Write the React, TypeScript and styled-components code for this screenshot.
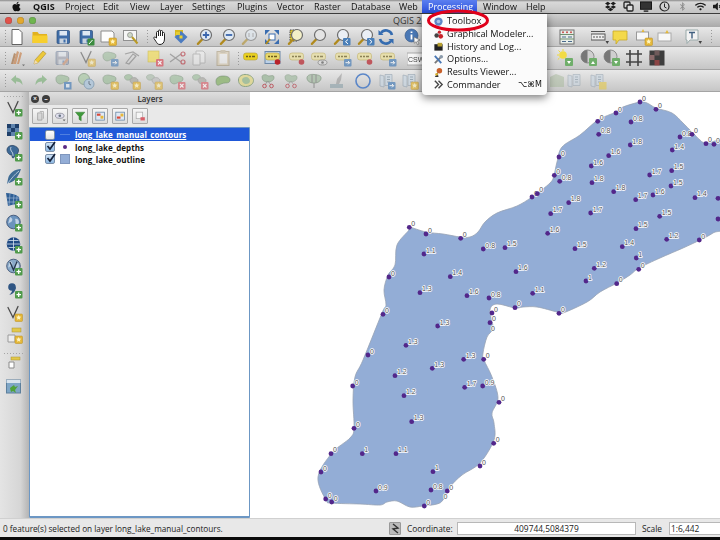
import React from "react";
import styled, { createGlobalStyle } from "styled-components";
import { FaApple, FaDropbox, FaWifi, FaBluetoothB, FaVolumeUp } from "react-icons/fa";

const Global = createGlobalStyle`
  html, body { margin: 0; padding: 0; width: 720px; height: 540px; overflow: hidden; background: #000; }
  #root { width: 720px; height: 540px; }
`;

const UI = `"Open Sans", "Liberation Sans", sans-serif`;

const Page = styled.div`
  width: 720px; height: 540px; position: relative; display: flex; flex-direction: column;
  font-family: ${UI}; color: #111; overflow: hidden; background: #000;
`;
const MenuBar = styled.div`
  height: 14px; flex: none; display: flex; align-items: stretch; font-size: 9px; line-height: 13px;
  background: linear-gradient(#8a8a8a 0, #d8d8d8 2px, #c4c4c4 100%);
  border-bottom: 1px solid #3c3c3c; box-sizing: border-box; filter: blur(0.25px);
`;
const AppleSlot = styled.div`
  width: 27px; flex: none; padding-left: 11px; box-sizing: border-box; display: flex; align-items: center; font-size: 11px; color: #111;
`;
const MenuItem = styled.div<{ $w: number; $bold?: boolean; $on?: boolean }>`
  width: ${(p) => p.$w}px; flex: none; box-sizing: border-box; padding-left: 6px; white-space: nowrap;
  font-weight: ${(p) => (p.$bold ? 700 : 500)};
  color: ${(p) => (p.$on ? "#fff" : "#111")};
  background: ${(p) => (p.$on ? "linear-gradient(#5b7ff0, #2a4fdc)" : "transparent")};
`;
const Tray = styled.div`
  margin-left: auto; display: flex; align-items: center; gap: 6px; color: #1c1c1c; font-size: 11px; margin-right: -4px;
`;
const TraySlot = styled.div<{ $faint?: boolean }>`
  width: 12px; display: flex; justify-content: center; align-items: center;
  color: ${(p) => (p.$faint ? "#888" : "inherit")};
  font-size: ${(p) => (p.$faint ? "9px" : "inherit")};
`;
const TitleBar = styled.div`
  height: 13px; flex: none; position: relative; display: flex; align-items: center; padding-left: 393px; font-size: 9px; color: #333;
  background: linear-gradient(#cfcfcf, #a9a9a9);
`;
const Lights = styled.div`
  position: absolute; left: 5px; top: 3px; display: flex; gap: 5px;
`;
const Light = styled.span<{ $c: string }>`
  width: 7px; height: 7px; border-radius: 50%; background: ${(p) => p.$c}; box-shadow: inset 0 0 1px #0008;
`;
const ToolRow = styled.div<{ $h: number }>`
  height: ${(p) => p.$h}px; flex: none; display: flex; align-items: center; box-sizing: border-box;
  background: linear-gradient(#e8e8e8, #c6c6c6); border-bottom: 1px solid #a4a4a4;
`;
const Slot = styled.div<{ $ml: number }>`
  width: 18px; height: 18px; margin-left: ${(p) => p.$ml}px; flex: none; display: flex; align-items: center; justify-content: center;
`;
const IconSvg = styled.svg`
  width: 18px; height: 18px; display: block; filter: blur(0.3px);
`;
const SmallIcon = styled(IconSvg)`
  width: 13px; height: 13px;
`;
const Grip = styled.div`
  width: 3px; height: 15px; background-image: radial-gradient(#9a9a9a 40%, transparent 45%); background-size: 3px 3px;
`;
const HGrip = styled.div`
  width: 22px; height: 3px; background-image: radial-gradient(#a6a6a6 40%, transparent 45%); background-size: 3px 3px;
`;
const Main = styled.div`
  flex: 1; min-height: 0; display: flex; background: #fff;
`;
const SideBar = styled.div`
  width: 29px; flex: none; display: flex; flex-direction: column; align-items: center;
  background: linear-gradient(90deg, #e4e4e4, #d6d6d6 70%, #b4b4b4);
`;
const SideSlot = styled.div<{ $mt: number }>`
  height: 18px; width: 22px; margin-top: ${(p) => p.$mt}px; margin-left: -2px; flex: none; display: flex; align-items: center; justify-content: center;
`;
const Dock = styled.div`
  width: 221px; flex: none; display: flex; flex-direction: column; background: #e9e9e9; box-sizing: border-box;
`;
const DockTitle = styled.div`
  height: 13px; flex: none; display: flex; align-items: center; padding-left: 2px; gap: 3px; position: relative;
  background: linear-gradient(#dedede, #c6c6c6);
`;
const DockTitleText = styled.div`
  position: absolute; left: 21px; right: 0; top: 0; text-align: center; font-size: 8px; line-height: 13px; font-weight: 600; color: #333;
`;
const DockClose = styled.span`
  width: 8px; height: 8px; border-radius: 50%; background: #3c3c3c; color: #eee; font-size: 7px; line-height: 8px; text-align: center; font-weight: 700;
`;
const DockTools = styled.div`
  height: 22px; flex: none; display: flex; align-items: center; gap: 4px; padding-left: 3px;
`;
const DockBtn = styled.div`
  width: 16px; height: 16px; flex: none; box-sizing: border-box; border: 1px solid #a9a9a9; border-radius: 1px;
  background: linear-gradient(#f6f6f6, #dcdcdc); display: flex; align-items: center; justify-content: center;
`;
const Tree = styled.div`
  flex: 1; min-height: 0; background: #fff; border: 1px solid #6c97c4; border-bottom-width: 2px; border-radius: 1px;
`;
const TreeRow = styled.div<{ $sel?: boolean; $h: number }>`
  height: ${(p) => p.$h}px; display: flex; align-items: center; padding-left: 15px;
  background: ${(p) => (p.$sel ? "#1f58d8" : "transparent")};
  color: ${(p) => (p.$sel ? "#fff" : "#111")};
`;
const Check = styled.span<{ $on?: boolean }>`
  width: 10px; height: 10px; flex: none; box-sizing: border-box; border: 1px solid #7b8fa8; border-radius: 2px; position: relative;
  background: ${(p) => (p.$on ? "linear-gradient(#cfe2f6, #8db8e2)" : "linear-gradient(#fff, #e4e4e4)")};
`;
const CheckSvg = styled.svg`
  position: absolute; left: 0; top: -2px; width: 10px; height: 10px; overflow: visible;
`;
const SymbolSlot = styled.span`
  width: 20px; flex: none; display: flex; align-items: center; justify-content: center;
`;
const Dot = styled.span`
  width: 4px; height: 4px; border-radius: 50%; background: #5a2a84;
`;
const Swatch = styled.span`
  width: 10px; height: 10px; background: #93add6; border: 0.5px solid #7f96bd; box-sizing: border-box;
`;
const LineSym = styled.span`
  width: 10px; height: 1px; background: #4f7fe0;
`;
const LayerName = styled.span<{ $sel?: boolean }>`
  font-size: 8px; font-weight: 700; white-space: nowrap; letter-spacing: 0.05px;
  text-decoration: ${(p) => (p.$sel ? "underline" : "none")};
`;
const Canvas = styled.div`
  flex: 1; min-width: 0; background: #fff;
`;
const MapSvg = styled.svg`
  width: 470px; height: 426px; display: block;
`;
const PtLabel = styled.text`
  font-family: "Liberation Sans", sans-serif; font-size: 7px; fill: #505050; stroke: #fff; stroke-width: 1.5px; paint-order: stroke; stroke-linejoin: round;
`;
const StatusBar = styled.div`
  height: 19px; flex: none; display: flex; align-items: center; background: #e8e8e8; font-size: 8.4px; color: #222; box-sizing: border-box; border-top: 1px solid #d0d0d0;
`;
const StatusMsg = styled.div`
  width: 389px; flex: none; padding-left: 3px; box-sizing: border-box; white-space: nowrap; font-size: 8.2px;
`;
const CoordBtn = styled.div`
  width: 12px; height: 13px; flex: none; background: #bbb; border: 1px solid #999; box-sizing: border-box; display: flex; align-items: center; justify-content: center; border-radius: 1px;
`;
const StatusLabel = styled.div<{ $w: number }>`
  width: ${(p) => p.$w}px; flex: none; white-space: nowrap; padding-left: 6px; box-sizing: border-box;
`;
const Field = styled.div`
  width: 179px; height: 13px; flex: none; background: #fff; border: 1px solid #b8b8b8; box-sizing: border-box; text-align: center; line-height: 11px;
`;
const Combo = styled.div`
  flex: 1; height: 13px; background: #fff; border: 1px solid #b8b8b8; border-right: none; box-sizing: border-box; line-height: 11px; padding-left: 1px;
`;
const BottomEdge = styled.div`
  height: 3px; flex: none; background: #0a0a0a;
`;
const DropMenu = styled.div`
  position: absolute; left: 422px; top: 14px; width: 125px; height: 81px; box-sizing: border-box; padding: 1px 0 0; z-index: 3;
  background: #fbfbfb; border-radius: 0 0 4px 4px; box-shadow: 0 3px 9px rgba(0,0,0,.5);
  font-size: 9.2px; font-weight: 500; filter: blur(0.2px);
`;
const DropItem = styled.div`
  height: 12.7px; display: flex; align-items: center; padding-right: 5px; white-space: nowrap; line-height: 12px;
`;
const DropIcon = styled.svg`
  width: 11px; height: 11px; margin-left: 11px; margin-right: 3px; flex: none;
`;
const Shortcut = styled.span`
  margin-left: auto; font-family: "DejaVu Sans", sans-serif; font-size: 8px;
`;
const Ring = styled.svg`
  position: absolute; left: 425px; top: 7px; width: 66px; height: 27px; z-index: 4; overflow: visible;
`;

/* ---- icon parts ---- */
const Star = () => (<g><rect x="10" y="10" width="7.5" height="7.5" rx="1" fill="#e4b738" stroke="#b98d1e" strokeWidth=".5"/><path d="M13.7 11l.8 1.6 1.8.2-1.3 1.2.3 1.8-1.6-.8-1.6.8.3-1.8-1.3-1.2 1.8-.2z" fill="#fff4c0"/></g>);
const Plus = () => (<g><rect x="10" y="10" width="7.5" height="7.5" rx="1" fill="#4f9a4a"/><path d="M13.7 11.5v4.5M11.5 13.7h4.5" stroke="#fff" strokeWidth="1.3"/></g>);
const Cross = () => (<g><rect x="10" y="10" width="7.5" height="7.5" rx="1" fill="#d9606a"/><path d="M12 12l3.5 3.5M15.5 12L12 15.5" stroke="#fff" strokeWidth="1.1"/></g>);
const Move = () => (<g><rect x="10" y="10" width="7.5" height="7.5" rx="1" fill="#4a7fb8"/><path d="M11.5 13.7h4M14 12l1.7 1.7-1.7 1.7" stroke="#fff" fill="none" strokeWidth="1"/></g>);
const Tri = () => <path d="M14.5 13h3.5l-1.75 3z" fill="#444"/>;
const RedDot = () => <circle cx="13.5" cy="13" r="2.8" fill="#b8232b"/>;
const Lens = ({ f = "#dfe9f3", c }: { f?: string; c?: React.ReactNode }) => (
  <g><path d="M6.5 11L2 15.8" stroke="#b08a1d" strokeWidth="2.4" strokeLinecap="round"/><circle cx="10" cy="7" r="5.5" fill={f} stroke="#6d6d6d" strokeWidth="1.2"/>{c}</g>
);
const Sheet = ({ c }: { c?: React.ReactNode }) => (
  <g><path d="M2 3h11l2 2v9H2z" fill="#fdfdfd" stroke="#8d8d8d"/>{c}</g>
);
const Floppy = ({ c = "#3f6da8" }: { c?: string }) => (
  <g><rect x="3" y="2.5" width="12.5" height="13" rx="1" fill={c} stroke="#2b4d7a" strokeWidth=".7"/><rect x="5.5" y="3" width="7.5" height="4.5" fill="#dfe8f2"/><rect x="5.5" y="10.5" width="7.5" height="5" fill="#c9d3de"/><rect x="9.5" y="11.5" width="2" height="3" fill="#3f6da8"/></g>
);
const Blob = ({ f = "#9dbd9b" }: { f?: string }) => (
  <path d="M2 6.5C2 3.5 6 2.5 9.5 3.5c3 .8 5.5.8 5.5 3.5s-3 2.5-5 3.5-3.5 2-5.5 1S2 9 2 6.5z" fill={f} stroke="#7a927a" strokeWidth=".8"/>
);
const Blob2 = ({ f = "#a8a8a0", g = "#9dbd9b" }: { f?: string; g?: string }) => (
  <g><path d="M1.5 5C1.5 3 5 2 7.5 3S10 6 7.5 7.5 1.5 8 1.5 5z" fill={g} stroke="#7a927a" strokeWidth=".6"/><path d="M7 8c0-2 4-3 6-2s3 3 1 5-7 1-7-3z" fill={f} stroke="#808080" strokeWidth=".6"/></g>
);
const Abc = ({ f = "#e8d46a" }: { f?: string }) => (
  <g><rect x="1.5" y="4" width="14" height="7" rx="2.5" fill={f} stroke="#b69f3a" strokeWidth=".6"/><path d="M4 7.5h2M7 7.5h2M10 7.5h3" stroke="#6b5d1d" strokeWidth="1.3"/></g>
);
const Cherries = () => (
  <g><path d="M3 5c0-2.5 4-3 5.5-1.5S14.5 2 15 5s-3 5-6.5 5S3 8 3 5z" fill="#a3bba1" stroke="#7a927a" strokeWidth=".6"/><path d="M8.5 9L6 13M9 9l3 4" stroke="#888" strokeWidth=".8"/><circle cx="5.5" cy="14" r="1.8" fill="none" stroke="#b9454e"/><circle cx="12.5" cy="14" r="1.8" fill="none" stroke="#b9454e"/></g>
);
const Book = ({ c }: { c?: React.ReactNode }) => (
  <g><path d="M2 3l4 1v11l-4-1zM7 2.5h7v11H7z" fill="#c9d6e2" stroke="#8898a8" strokeWidth=".7"/><path d="M9 5h3M9 7.5h3M9 10h3" stroke="#7f93a3" strokeWidth="1"/>{c}</g>
);
const Vee = () => (
  <path d="M3 3.5l5 10 5-11" stroke="#4a4a4a" fill="none" strokeWidth="1.3" strokeLinecap="round"/>
);
const Globe = ({ f, c }: { f: string; c?: React.ReactNode }) => (
  <g><circle cx="8.5" cy="8" r="6.8" fill={f} stroke="#32486b" strokeWidth=".8"/><path d="M5 3c2 1 3 2 2 4s-3 1-4 3M10 5c2-1 4 1 4 3s-2 3-3 2 0-3-1-5z" fill="#d6e2ef" opacity=".8"/>{c}</g>
);

const G: Record<string, React.ReactNode> = {
  new: <path d="M4 1.5h7l3 3v12H4z" fill="#fff" stroke="#555" strokeWidth=".9"/>,
  open: <g><path d="M1.5 4h5l1.5 2h8v9H1.5z" fill="#e2b21f"/><path d="M1.5 7.5h15V15H1.5z" fill="#f7cf2e"/></g>,
  save: <Floppy />,
  saveas: <g><Floppy /><rect x="10.5" y="10.5" width="7" height="7" rx="1" fill="#3b8c3f"/><path d="M12 16l3.5-4" stroke="#fff"/></g>,
  newprint: <g><Sheet /><Star /></g>,
  composer: <g><rect x="1.5" y="2.5" width="13" height="10" fill="#f6f6f6" stroke="#909090"/><circle cx="8" cy="7" r="2.5" fill="#cfd9c8" stroke="#777" strokeWidth=".6"/><path d="M10 9l5.5 6.5" stroke="#b99a25" strokeWidth="2"/></g>,
  hand: <path d="M5.5 10V4.5a1 1 0 012 0V8V3a1 1 0 012 0v5V3.5a1 1 0 012 0V8 5.5a1 1 0 012 0V11c0 3.5-2 5.5-4.5 5.5S6 15 5 13.5L3 10.5c-.7-1.2.9-2.2 1.7-1z" fill="#fff" stroke="#222" strokeWidth="1"/>,
  pansel: <g><rect x="3" y="2" width="8" height="6" fill="#d7b81f"/><path d="M9 3l6.5 6L9 15.5 2.5 9z" fill="#4c7cc0"/><path d="M4 4h4v3H4z" fill="#e9d132" opacity=".9"/><rect x="7.5" y="7.5" width="3" height="3" fill="#e9d132"/></g>,
  zoomin: <Lens c={<path d="M10 3.8v6.4M6.8 7h6.4" stroke="#3a66ad" strokeWidth="1.8"/>} />,
  zoomout: <Lens c={<path d="M6.8 7h6.4" stroke="#3a66ad" strokeWidth="1.8"/>} />,
  zoom11: <g opacity=".55"><Lens c={<path d="M8 5v4M12 5v4" stroke="#888"/>} /></g>,
  zoomfull: <g><path d="M2 2h5L2 7zM16 2h-5l5 5zM2 16h5l-5-5zM16 16h-5l5-5z" fill="#3a6db0"/><rect x="6" y="6" width="6" height="6" fill="#fff" stroke="#3a6db0"/><path d="M3 16L7 11" stroke="#b08a1d" strokeWidth="2"/></g>,
  zoomsel: <g><rect x="3" y="2" width="8" height="11" fill="#e2c830" stroke="#444" strokeDasharray="1.5 1"/><Lens f="#f3efc8" /></g>,
  zoomlayer: <Lens f="#e4e4e4" />,
  zoomlast: <g><Lens f="#eaeff5" /><rect x="10" y="10" width="7.5" height="7.5" rx="1" fill="#4a7fb8"/><path d="M15 11.5l-2.5 2.2 2.5 2.2" stroke="#fff" fill="none"/></g>,
  zoomnext: <g><Lens f="#eaeff5" /><rect x="10" y="10" width="7.5" height="7.5" rx="1" fill="#4a7fb8"/><path d="M12.5 11.5l2.5 2.2-2.5 2.2" stroke="#fff" fill="none"/></g>,
  refresh: <g fill="none" stroke="#356cb0" strokeWidth="2.6"><path d="M15 7a6.2 6.2 0 00-11-2"/><path d="M3 11a6.2 6.2 0 0011 2"/><path d="M1.5 2v5h5zM16.5 16v-5h-5z" fill="#356cb0" stroke="none"/></g>,
  info: <g><circle cx="7.5" cy="7.5" r="6.5" fill="#4a78b5" stroke="#2c4f80" strokeWidth=".6"/><path d="M7.5 3.5v1.4M7.5 6.5v5" stroke="#fff" strokeWidth="1.8"/><path d="M10 9l6 3-2.5 1 1.5 3-1.5.7-1.3-3-2 1.5z" fill="#fff" stroke="#666" strokeWidth=".6"/></g>,
  calc: <g><rect x="2" y="2" width="14" height="14" fill="#e8eee8" stroke="#707070"/><path d="M2 6.5h14M2 11h14" stroke="#6f8f6f"/><circle cx="5" cy="4.3" r="1" fill="#c8504c"/><circle cx="9" cy="4.3" r="1" fill="#c8504c"/><circle cx="13" cy="4.3" r="1" fill="#c8504c"/><path d="M4 9h4M10 9h4M4 13.5h4M10 13.5h4" stroke="#4a6a8c" strokeWidth="1.2"/></g>,
  measure: <g><rect x="0" y="6" width="14" height="6" fill="#eee" stroke="#555"/><path d="M0 3.5h14M3 8v2M6 8v2M9 8v2M12 8v2" stroke="#555"/><Tri /></g>,
  note: <path d="M2 3h14v9H8l-3 4v-4H2z" fill="#f4d94a" stroke="#c8a828" strokeWidth=".8" strokeLinejoin="round"/>,
  notestar: <g><rect x="1.5" y="4" width="12" height="8" fill="#f8f8f8" stroke="#999"/><path d="M8 1l1.5 3h-3z" fill="#e4b738"/><Star /></g>,
  notestar2: <g><rect x="2" y="5" width="13" height="8" fill="#f8f8f8" stroke="#aaa"/><path d="M11 2l1.8 3.2H9.2z" fill="#e4b738"/></g>,
  text: <g><path d="M2 2h12v10H6l-3 3.5V12H2z" fill="#f3f3f3" stroke="#9aa"/><path d="M5 4.5h6M8 4.5v6" stroke="#3f5f7f" strokeWidth="1.4" fill="none"/><Tri /></g>,
  pencils: <g opacity=".75"><path d="M5 15L9 2l2 1-3 12zM9 15l3-12 2 1-3 11z" fill="#c98a5a"/><path d="M3 15l3-11 2 1-3 10z" fill="#a8784e"/><path d="M14 15.5h3l-1.5 1.8z" fill="#555"/></g>,
  pencil: <g><path d="M4 15l1-4 8-9 3 2.5-8 9.2z" fill="#ecc83a" stroke="#a98c2a" strokeWidth=".6"/><path d="M4 15l1-4 3 2.7z" fill="#f1dcb4"/></g>,
  saveedit: <g opacity=".45"><Floppy c="#8b8fa0" /><path d="M9 15l5-6 2 1.5-5 6z" fill="#c8784a"/></g>,
  vstar: <g opacity=".55"><Vee /><Star /></g>,
  blobmove: <g opacity=".6"><Blob /><Move /></g>,
  tool: <g opacity=".55"><path d="M3 14L10 5l3 2-7 8zM2 5l8-2 6 4" fill="none" stroke="#777" strokeWidth="1.2"/></g>,
  yellowx: <g opacity=".8"><rect x="2" y="2" width="11" height="11" fill="#efdd6a" stroke="#c8b53f" strokeWidth=".6"/><Cross /></g>,
  scissors: <g opacity=".7"><path d="M1 5l11 8M1 13l11-8" stroke="#8a8a8a" strokeWidth="1.2"/><circle cx="14" cy="5" r="2" fill="none" stroke="#b9454e" strokeWidth="1.2"/><circle cx="14" cy="13" r="2" fill="none" stroke="#b9454e" strokeWidth="1.2"/></g>,
  copy: <g opacity=".4"><path d="M6 2h7l2 2v10H6z" fill="#f5f5f5" stroke="#8a8a8a"/><path d="M3 5h7v11H3z" fill="#f5f5f5" stroke="#8a8a8a"/></g>,
  paste: <g opacity=".5"><rect x="3" y="2.5" width="12" height="14" fill="#d9c8a6" stroke="#a08d68"/><rect x="5.5" y="5" width="7.5" height="9.5" fill="#f5f5f5"/><rect x="6.5" y="1" width="5" height="3" fill="#b8a888"/></g>,
  abc: <Abc f="#e8d020" />,
  abcmap: <g><rect x="1" y="2.5" width="15" height="12" fill="#bcd1e8" stroke="#6c88a8"/><Abc f="#e8d86a" /><RedDot /></g>,
  abcred: <g opacity=".7"><Abc f="#ebe09a" /><RedDot /></g>,
  abceye: <g opacity=".65"><Abc f="#ebe09a" /><ellipse cx="12.5" cy="13.5" rx="4.5" ry="2.5" fill="#ddd" stroke="#777"/><circle cx="12.5" cy="13.5" r="1.3" fill="#555"/></g>,
  abcmove: <g opacity=".7"><Abc f="#ebe09a" /><Move /></g>,
  csw: <g><rect x="0" y="4" width="18" height="12" fill="#f6f6f6" stroke="#aaa"/><text x="1" y="13" fontSize="7" fontFamily="Liberation Sans, sans-serif" fill="#444">CSW</text></g>,
  sun: <g><circle cx="7" cy="6" r="3.8" fill="#f2dc45"/><path d="M7 0v2M1 6h2M2.5 1.5L4 3M1.8 10.5L3.5 9" stroke="#f0d83a"/><rect x="9" y="9" width="8" height="8" rx="1" fill="#6fae6a"/><path d="M11 12h4l-2 3z" fill="#fff"/></g>,
  up: <g><circle cx="7.5" cy="7.5" r="6.5" fill="#cfcfcf" stroke="#8c8c8c"/><path d="M7.5 1a6.5 6.5 0 000 13z" fill="#777"/><rect x="9" y="9" width="8" height="8" rx="1" fill="#6fae6a"/><path d="M11 15h4l-2-3z" fill="#fff"/></g>,
  down: <g><circle cx="7.5" cy="7.5" r="6.5" fill="#cfcfcf" stroke="#8c8c8c"/><path d="M7.5 1a6.5 6.5 0 000 13z" fill="#777"/><rect x="9" y="9" width="8" height="8" rx="1" fill="#6fae6a"/><path d="M11 12h4l-2 3z" fill="#fff"/></g>,
  grid: <path d="M5 1v16M13 1v16M1 5h16M1 13h16" stroke="#444" strokeWidth="1.6"/>,
  raster: <g><rect x="1.5" y="1.5" width="15" height="15" fill="#3d3d3d"/><rect x="1.5" y="6" width="5" height="5" fill="#8a6a6a"/><rect x="6.5" y="1.5" width="5" height="5" fill="#6e5a5a"/><rect x="6.5" y="11" width="5" height="5.5" fill="#c04a4a" opacity=".6"/></g>,
  undo: <g opacity=".7"><path d="M7 3L2 7.5 7 12V9.5c3 0 5 1 6.5 3.5C13.5 8.5 11 5.8 7 5.5z" fill="#7fb07c"/></g>,
  redo: <g opacity=".7"><path d="M11 3l5 4.5-5 4.5V9.5c-3 0-5 1-6.5 3.5C4.5 8.5 7 5.8 11 5.5z" fill="#7fb07c"/></g>,
  blobsave: <g opacity=".7"><Blob /><rect x="10" y="10" width="7.5" height="7.5" fill="#4a7fb8"/><rect x="12" y="12" width="3.5" height="3.5" fill="#dfe8f2"/></g>,
  rotate: <g opacity=".7"><circle cx="7" cy="7" r="5.5" fill="#a8c8a4" stroke="#7a927a"/><circle cx="12" cy="12" r="5" fill="#a8c4dc" stroke="#6f8fab"/><path d="M12 9v3l2 1" stroke="#456" fill="none"/></g>,
  blobstar: <g opacity=".7"><Blob /><Star /></g>,
  blob2star: <g opacity=".7"><Blob2 /><Star /></g>,
  blob3star: <g opacity=".6"><Blob2 f="#bbb" g="#a8bba8" /><Star /></g>,
  blobx: <g opacity=".65"><Blob /><Cross /></g>,
  blob2x: <g opacity=".65"><Blob2 /><Cross /></g>,
  blobgreen: <path d="M2 9c0-3 3-5 7-5s7 1 7 4-3 3-5 3-4 1-6 2-3-1-3-4z" fill="#9cbb85" stroke="#7a927a" strokeWidth=".6"/>,
  ring: <g opacity=".85"><path d="M1.5 8c0-4 4-6 8-5.500s7 3 7 6-3 6-8 6-7-3-7-6.500z" fill="#e0d890" stroke="#7e9a78"/><path d="M5 8c0-2 2-3 4-3s4 2 4 4-2 3-4 3-4-2-4-4z" fill="#9cbb95"/></g>,
  cherry: <g opacity=".85"><Cherries /></g>,
  cherry2: <g opacity=".7"><Cherries /></g>,
  split: <g opacity=".7"><path d="M2 6c0-3 4-4 7-3.5S16 3 16 6s-3 5-7 5-7-2-7-5z" fill="#a3bba1" stroke="#7a927a"/><path d="M7 2.5V11M11 2.5V11M9 11v5" stroke="#777" fill="none"/></g>,
  stamp: <g opacity=".6"><rect x="2" y="12" width="13" height="4" fill="#8aa0a8"/><path d="M8 12l1-5 5-6-1 7-2 4z" fill="#9a9a9a"/></g>,
  circle: <circle cx="10" cy="9" r="7" fill="none" stroke="#5a86c8" strokeWidth="1.6"/>,
  bookb: <g opacity=".7"><Book /><Move /></g>,
  bookstar: <g opacity=".7"><Book /><Star /></g>,
  bookgr: <g opacity=".55"><Book /></g>,
  bookpen: <g opacity=".6"><Book /><rect x="10" y="10" width="7.5" height="7.5" fill="#e4c848"/></g>,
  mapgreen: <g opacity=".5"><path d="M2 5l6-3 8 3v10H2z" fill="#a6b89a"/></g>,
  sideV: <g><Vee /><Plus /></g>,
  sideRaster: <g><path d="M2 2h4v4H2zM10 2h4v4h-4zM6 6h4v4H6zM2 10h4v4H2z" fill="#1f3f6a"/><path d="M6 2h4v4H6zM2 6h4v4H2zM10 6h4v4h-4zM6 10h4v4H6z" fill="#5f84ad"/><Plus /></g>,
  sidePg: <g><path d="M2 6c0-3 3-5 6-4.500S14 4 13.5 7 11 11 10 12c-1 1-1 2-2 2s-1-2-1-3c-1 0-2 0-3-1S2 8 2 6z" fill="#3e6a97" stroke="#1f3a5a" strokeWidth=".7"/><path d="M6 3c-1 2 0 4 1 5s1 3 1 4" stroke="#dfe8f2" fill="none" strokeWidth=".8"/><Plus /></g>,
  sideFeather: <g><path d="M16 1C10 1 4 5 3 11l-1 5 1-1c5 0 10-5 13-14z" fill="#3f6c95"/><path d="M3 15C6 11 10 6 14 3" stroke="#dfe8f2" fill="none" strokeWidth=".7"/><Plus /></g>,
  sideMesh: <g><path d="M1 2c4 0 9 1 13 4l1 8c-4-1-9 0-12 1z" fill="#2f5f95"/><path d="M5 2.5l-1 12M9 3.5l-1 11M12 5l-.5 9M2 7h12M2 11h12" stroke="#a8c0dc" strokeWidth=".6"/><Plus /></g>,
  sideWms: <g><Globe f="#6b93bd" /><Plus /></g>,
  sideWcs: <g><circle cx="8.5" cy="8" r="6.8" fill="#1f4a84"/><path d="M2 8h13M8.5 1.5v13M3.5 4.5h10M3.5 11.5h10" stroke="#d6e2ef" strokeWidth=".8"/><Plus /></g>,
  sideWfs: <g><Globe f="#89a9c8" c={<path d="M5 4l3.5 8L12 3.5" stroke="#26354a" fill="none" strokeWidth="1.3"/>} /><Plus /></g>,
  sideComma: <g><circle cx="7" cy="6" r="3.8" fill="#2f5583"/><path d="M10.800 6c0 4-2.500 7-6.500 8 2-2 3-3.500 3-6z" fill="#2f5583"/><Plus /></g>,
  sideVStar: <g><Vee /><Star /></g>,
  sideTree: <g><rect x="7" y="2" width="9" height="4" fill="#e2c84a" stroke="#a89030" strokeWidth=".5"/><path d="M3 9h7v7H3z" fill="#eee" stroke="#9a9a9a"/><Star /></g>,
  sideTree2: <g><rect x="6" y="3" width="9" height="3" fill="#e2c84a" stroke="#a89030" strokeWidth=".5"/><path d="M4 8h5v6H4z" fill="#fff" stroke="#8a8a8a"/></g>,
  sideMap: <g><rect x="1.5" y="2" width="14" height="13" fill="#7ea6c6" stroke="#5c7f9c"/><rect x="1.5" y="2" width="14" height="3" fill="#d8e4ee"/><path d="M5 10l4-3 1 2 3-1-3 4 1 3-3-2-2 1z" fill="#4fa23a"/></g>,
};

const Icon = ({ n }: { n: string }) => (
  <IconSvg viewBox="0 0 18 18">{G[n]}</IconSvg>
);

type Cell = [string, number];
/* distance to leave before each 18px slot so its centre falls on the listed coordinate */
const offsets = (cells: Cell[], origin: number) =>
  cells.map(([n, c], i) => ({ n, off: i === 0 ? c - origin - 9 : c - cells[i - 1][1] - 18 }));

const row1: Cell[] = [["grip",5],["new",17],["open",40],["save",63],["saveas",86],["newprint",108],["composer",131],["grip",147],["hand",160],["pansel",181],["zoomin",205],["zoomout",228],["zoom11",250],["zoomfull",272],["zoomsel",296],["zoomlayer",319],["zoomlast",342],["zoomnext",366],["refresh",386],["info",413],["calc",567],["measure",600],["note",620],["notestar",644],["notestar2",665],["text",693],["grip",711]];
const row2: Cell[] = [["grip",5],["pencils",17],["pencil",39],["saveedit",62],["vstar",87],["blobmove",110],["tool",132],["yellowx",155],["scissors",178],["copy",199],["paste",223],["grip",238],["abc",251],["abcmap",273],["abcred",297],["abceye",319],["abcmove",343],["abcred",365],["abcmove",388],["csw",416],["sun",565],["up",589],["down",612],["grid",634],["raster",657]];
const row3: Cell[] = [["grip",5],["undo",18],["redo",40],["blobsave",63],["rotate",86],["blobstar",110],["blob2star",132],["blob3star",154],["blobx",177],["blob2x",200],["blobgreen",223],["ring",246],["cherry",268],["cherry2",291],["split",314],["stamp",337],["circle",362],["bookb",387],["bookstar",410],["mapgreen",557],["bookgr",575],["bookpen",598]];
const side: Cell[] = [["hgrip",96],["sideV",108],["sideRaster",131],["sidePg",153],["sideFeather",177],["sideMesh",200],["sideWms",223],["sideWcs",245],["sideWfs",267],["sideComma",290],["sideVStar",313],["sideTree",335],["hgrip",353],["sideTree2",363],["sideMap",387]];

const ToolBar = ({ cells, h }: { cells: Cell[]; h: number }) => (
  <ToolRow $h={h}>
    {offsets(cells, 0).map((s, i) => (
      <Slot key={i} $ml={s.off}>{s.n === "grip" ? <Grip /> : <Icon n={s.n} />}</Slot>
    ))}
  </ToolRow>
);

const pts: [number, number, string][] = [
  [409.3,227.3,"0"],[426,234,"0"],[460.7,238.3,"0"],[483.3,249,"0.8"],[505,247.7,"1.5"],[424,254,"1.1"],[389,277,"0"],[450.3,276.7,"1.4"],[516,271.7,"1.6"],[420,292.7,"1.3"],[467,295.7,"1.6"],[489,298,"0.8"],[532.7,293.3,"1.1"],[383,314.3,"0"],[492,313,"0"],[515,307.7,"0"],[490,322.7,"0"],[437.7,326,"1.3"],[406,345.3,"1.3"],[368,355,"0"],[463.7,359.3,"1.3"],[483.7,359.3,"0"],
  [432.3,368.3,"1.3"],[395,375.7,"1.2"],[352.7,386,"0"],[464.7,387.3,"1.7"],[482.7,386,"0.9"],[404,395.7,"1.2"],[499,402.3,"0"],[411.7,421.7,"1.3"],[354,428.3,"0"],[493.7,443.3,"0"],[331,453.7,"0"],[362.3,453.7,"1"],[396,453.7,"1.1"],[480,466,"0"],[433,471.7,"1"],[321,472,"0"],[431,490,"0.8"],[376,491,"0.9"],[447.3,491,"0"],[325.7,499,"0"],[331.7,502,"0"],[424.3,506,"0"],
  [640,102,"0"],[656,109.3,"0"],[616,113,"0"],[597.7,121.3,"0"],[631,122,"0.8"],[598.7,134.3,"0.8"],[680,137,"0.8"],[692,134.3,"0"],[630.3,145,"1.8"],[706,143.7,"0"],[714,144.3,"0"],[672.3,150,"1.4"],[608.7,155.7,"1.6"],[559,157,"0"],[591.3,166,"1.6"],[554.3,175.3,"0"],[559.7,181.3,"0.8"],[592,182.7,"1.8"],[649.7,175,"1.7"],[671.7,170.7,"1.5"],[671,186,"1.5"],[613.7,191.7,"1.8"],[532,197,"0"],[537.3,193.7,"0"],[653,195,"1.6"],[635.7,199.7,"1.7"],[695,197.7,"1.4"],[718,198.3,""],[568.7,202.7,"1.8"],[550.7,213.7,"1.7"],[590.7,213,"1.7"],[659.7,216.3,"1.5"],[718,219,""],
  [636,228.7,"1.5"],[547.7,233.3,"1.6"],[666.7,239.3,"1.2"],[699.3,240,"0"],[575,248.7,"1.5"],[622.3,246.7,"1.4"],[636.3,258,"1"],[594.3,268.3,"1.2"],[638.7,269.3,"0"],[586,281,"1"],[616.7,283.7,"0"],[559,313.3,"0"],
];
const labelsOnly: [number, number, string][] = [[491,331,"0"],[443.5,498.5,"0"]];

const lakePts = [409,227,426,232,443,234,460,237,470,237,478,232,485,222,497,213,517,206,532,197,550,183,554,175,557,162,562,147,580,135,598,120,616,112,623,107,640,102,647,103,656,108,672,113,683,123,692,132,700,140,706,143,730,146,730,220,713,233,700,240,683,248,660,258,639,268,630,275,617,283,600,292,587,302,563,313,557,312,537,307,523,307,515,308,497,304,490,310,493,328,487,337,483,353,484,360,492,377,498,398,492,413,494,423,494,440,480,463,462,475,450,487,443,500,437,504,423,506,410,507,397,501,387,502,380,505,360,504,332,503,326,500,318,477,332,453,350,438,354,428,353,400,355,377,363,360,382,313,386,305,384,290,388,275,395,265,397,245,409,230];

const smoothPath = (f: number[]) => {
  const p: [number, number][] = [];
  for (let i = 0; i < f.length; i += 2) p.push([f[i], f[i + 1]]);
  const n = p.length;
  let d = `M${p[0][0]} ${p[0][1]}`;
  for (let i = 0; i < n; i++) {
    const a = p[(i - 1 + n) % n], b = p[i], c = p[(i + 1) % n], e = p[(i + 2) % n];
    const c1 = [b[0] + (c[0] - a[0]) / 6, b[1] + (c[1] - a[1]) / 6];
    const c2 = [c[0] - (e[0] - b[0]) / 6, c[1] - (e[1] - b[1]) / 6];
    d += `C${c1[0].toFixed(1)} ${c1[1].toFixed(1)} ${c2[0].toFixed(1)} ${c2[1].toFixed(1)} ${c[0]} ${c[1]}`;
  }
  return d + "Z";
};
const lake = smoothPath(lakePts);

const dropItems: { t: string; s?: string; ic: React.ReactNode }[] = [
  { t: "Toolbox", ic: <g><circle cx="6" cy="6" r="4.5" fill="#5d86c6"/><circle cx="6" cy="6" r="2" fill="#a9c4e8"/></g> },
  { t: "Graphical Modeler...", ic: <g><circle cx="4" cy="7" r="2.5" fill="#444"/><circle cx="8.5" cy="8" r="2.5" fill="#c8222a"/><circle cx="7" cy="3.5" r="1.8" fill="#c8222a"/></g> },
  { t: "History and Log...", ic: <g><rect x="1.5" y="3.5" width="9" height="7" fill="#222"/><rect x="5" y="2" width="5" height="4" fill="#b8a030"/></g> },
  { t: "Options...", ic: <g><path d="M2 10l6-6" stroke="#7a7a7a" strokeWidth="2"/><path d="M2 2l7 8" stroke="#4a78b5" strokeWidth="2"/><circle cx="9" cy="3" r="2" fill="#8a9aaa"/></g> },
  { t: "Results Viewer...", ic: <g><circle cx="7" cy="4" r="3" fill="#c8602a"/><path d="M5 6l-3 5h4z" fill="#333"/><circle cx="4" cy="8" r="1.5" fill="#d8b030"/></g> },
  { t: "Commander", s: "⌥⌘M", ic: <path d="M2 2l4 4-4 4M6 2l4 4-4 4" fill="none" stroke="#444" strokeWidth="1.5"/> },
];

const dockIcons: React.ReactNode[] = [
  <g opacity=".6"><path d="M5 4h6v10H5z" fill="#ccc" stroke="#666"/><path d="M8 2h5v10" fill="none" stroke="#666"/></g>,
  <g opacity=".8"><ellipse cx="8" cy="8" rx="6" ry="3.5" fill="#dde" stroke="#667"/><circle cx="8" cy="8" r="1.8" fill="#456"/><path d="M12 13h4l-2 2.5z" fill="#444"/></g>,
  <path d="M2 3h13l-5 6v6l-3-2V9z" fill="#3f9a3a" stroke="#2a6e28" strokeWidth=".6"/>,
  <g><rect x="2.5" y="3" width="12" height="11" fill="#dfe9f5" stroke="#5f7f9f"/><rect x="4" y="5" width="5" height="3" fill="#d84a3a"/><rect x="9" y="8" width="4" height="4" fill="#e8b83a"/></g>,
  <g><rect x="2.5" y="3" width="12" height="11" fill="#dfe9f5" stroke="#5f7f9f"/><rect x="4" y="9" width="5" height="3" fill="#d84a3a"/><rect x="9" y="5" width="4" height="4" fill="#e8b83a"/></g>,
  <g><rect x="3" y="3" width="9" height="9" fill="#f6f6f6" stroke="#aaa"/><rect x="9" y="10" width="6" height="4.5" fill="#d9606a"/></g>,
];

const CheckMark = () => (
  <CheckSvg viewBox="0 0 10 10"><path d="M1.5 5l2.5 3L9 1" fill="none" stroke="#14213a" strokeWidth="1.7"/></CheckSvg>
);

export default function App() {
  return (
    <Page>
      <Global />
      <MenuBar>
        <AppleSlot><FaApple /></AppleSlot>
        <MenuItem $w={32} $bold>QGIS</MenuItem>
        <MenuItem $w={38}>Project</MenuItem>
        <MenuItem $w={27}>Edit</MenuItem>
        <MenuItem $w={30}>View</MenuItem>
        <MenuItem $w={32}>Layer</MenuItem>
        <MenuItem $w={45}>Settings</MenuItem>
        <MenuItem $w={40}>Plugins</MenuItem>
        <MenuItem $w={37}>Vector</MenuItem>
        <MenuItem $w={37}>Raster</MenuItem>
        <MenuItem $w={48}>Database</MenuItem>
        <MenuItem $w={29}>Web</MenuItem>
        <MenuItem $w={55} $on>Processing</MenuItem>
        <MenuItem $w={43}>Window</MenuItem>
        <MenuItem $w={40}>Help</MenuItem>
        <Tray>
          <TraySlot><FaDropbox /></TraySlot>
          <TraySlot>
            <svg width="11" height="11" viewBox="0 0 11 11"><rect x="1" y="1" width="6" height="6" rx="1" fill="none" stroke="#222" strokeWidth="1.3"/><rect x="4" y="4" width="6" height="6" rx="1" fill="#ddd" stroke="#222" strokeWidth="1.3"/></svg>
          </TraySlot>
          <TraySlot>
            <svg width="13" height="11" viewBox="0 0 13 11"><rect x="0.5" y="0.5" width="12" height="8" fill="#333" stroke="#111"/><path d="M4 10.5h5" stroke="#222" strokeWidth="1.5"/></svg>
          </TraySlot>
          <TraySlot>
            <svg width="11" height="11" viewBox="0 0 11 11"><circle cx="5.5" cy="5.5" r="4.5" fill="none" stroke="#222" strokeWidth="1.2"/><path d="M5.5 2.5V6l2 1" fill="none" stroke="#222"/></svg>
          </TraySlot>
          <TraySlot $faint><FaBluetoothB /></TraySlot>
          <TraySlot><FaWifi /></TraySlot>
          <TraySlot><FaVolumeUp /></TraySlot>
        </Tray>
      </MenuBar>
      <TitleBar>
        <Lights><Light $c="#e2524a" /><Light $c="#e3a92f" /><Light $c="#6fb550" /></Lights>
        QGIS 2.0
      </TitleBar>
      <ToolBar cells={row1} h={20} />
      <ToolBar cells={row2} h={23} />
      <ToolBar cells={row3} h={22} />
      <Main>
        <SideBar>
          {offsets(side, 92).map((s, i) => (
            <SideSlot key={i} $mt={s.off}>{s.n === "hgrip" ? <HGrip /> : <Icon n={s.n} />}</SideSlot>
          ))}
        </SideBar>
        <Dock>
          <DockTitle>
            <DockClose>×</DockClose>
            <DockClose>–</DockClose>
            <DockTitleText>Layers</DockTitleText>
          </DockTitle>
          <DockTools>
            {dockIcons.map((c, i) => (
              <DockBtn key={i}><SmallIcon viewBox="0 0 18 18">{c}</SmallIcon></DockBtn>
            ))}
          </DockTools>
          <Tree>
            <TreeRow $sel $h={13}><Check /><SymbolSlot><LineSym /></SymbolSlot><LayerName $sel>long_lake_manual_contours</LayerName></TreeRow>
            <TreeRow $h={12}>
              <Check $on><CheckMark /></Check><SymbolSlot><Dot /></SymbolSlot><LayerName>long_lake_depths</LayerName>
            </TreeRow>
            <TreeRow $h={12}>
              <Check $on><CheckMark /></Check><SymbolSlot><Swatch /></SymbolSlot><LayerName>long_lake_outline</LayerName>
            </TreeRow>
          </Tree>
        </Dock>
        <Canvas>
          <MapSvg viewBox="250 92 470 426">
            <path d={lake} fill="#93add6" stroke="#97a2b4" strokeWidth=".8" strokeLinejoin="round"/>
            {pts.map(([x, y, t], i) => (
              <g key={i}>
                <circle cx={x} cy={y} r="2.4" fill="#53278a" />
                <PtLabel x={x + 2} y={y - 1.5}>{t}</PtLabel>
              </g>
            ))}
            {labelsOnly.map(([x, y, t], i) => <PtLabel key={i} x={x} y={y}>{t}</PtLabel>)}
          </MapSvg>
        </Canvas>
      </Main>
      <StatusBar>
        <StatusMsg>0 feature(s) selected on layer long_lake_manual_contours.</StatusMsg>
        <CoordBtn>
          <svg width="9" height="11" viewBox="0 0 9 11"><path d="M2 1l5 4-5 1 5 4" fill="none" stroke="#333" strokeWidth="1.4"/></svg>
        </CoordBtn>
        <StatusLabel $w={56}>Coordinate:</StatusLabel>
        <Field>409744,5084379</Field>
        <StatusLabel $w={33}>Scale</StatusLabel>
        <Combo>1:6,442</Combo>
      </StatusBar>
      <BottomEdge />
      <DropMenu>
        {dropItems.map((d) => (
          <DropItem key={d.t}>
            <DropIcon viewBox="0 0 12 12">{d.ic}</DropIcon>
            {d.t}
            {d.s && <Shortcut>{d.s}</Shortcut>}
          </DropItem>
        ))}
      </DropMenu>
      <Ring viewBox="0 0 66 27">
        <ellipse cx="33" cy="13.5" rx="29.5" ry="9.5" fill="none" stroke="#e0001b" strokeWidth="3"/>
      </Ring>
    </Page>
  );
}
